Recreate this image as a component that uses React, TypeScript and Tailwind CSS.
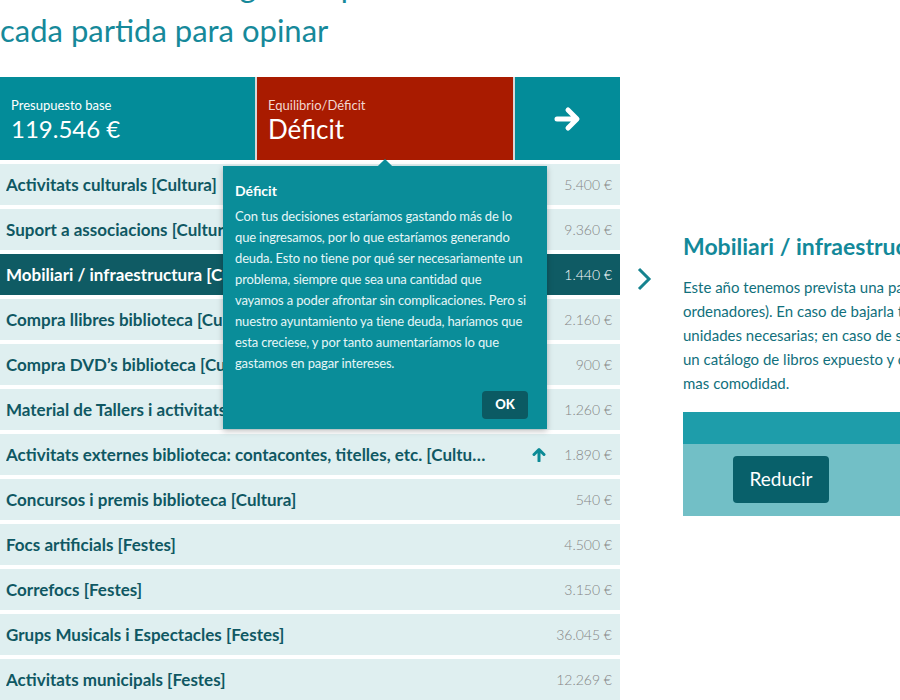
const rows = [
  { name: 'Activitats culturals [Cultura]', amount: '5.400 €' },
  { name: 'Suport a associacions [Cultura]', amount: '9.360 €' },
  { name: 'Mobiliari / infraestructura [Cultura]', amount: '1.440 €', active: true },
  { name: 'Compra llibres biblioteca [Cultura]', amount: '2.160 €' },
  { name: 'Compra DVD’s biblioteca [Cultura]', amount: '900 €' },
  { name: 'Material de Tallers i activitats [Cultura]', amount: '1.260 €' },
  { name: 'Activitats externes biblioteca: contacontes, titelles, etc. [Cultura]', amount: '1.890 €', up: true },
  { name: 'Concursos i premis biblioteca [Cultura]', amount: '540 €' },
  { name: 'Focs artificials [Festes]', amount: '4.500 €' },
  { name: 'Correfocs [Festes]', amount: '3.150 €' },
  { name: 'Grups Musicals i Espectacles [Festes]', amount: '36.045 €' },
  { name: 'Activitats municipals [Festes]', amount: '12.269 €' },
]

const tipLines = [
  'Con tus decisiones estaríamos gastando más de lo',
  'que ingresamos, por lo que estaríamos generando',
  'deuda. Esto no tiene por qué ser necesariamente un',
  'problema, siempre que sea una cantidad que',
  'vayamos a poder afrontar sin complicaciones. Pero si',
  'nuestro ayuntamiento ya tiene deuda, haríamos que',
  'esta creciese, y por tanto aumentaríamos lo que',
  'gastamos en pagar intereses.',
]

const font = { fontFamily: 'Lato, "Open Sans", sans-serif' }

const ArrowRight = () => (
  <svg width="28" height="26" viewBox="0 0 28 26" fill="none">
    <path d="M3 13h19M14 4l9 9-9 9" stroke="white" strokeWidth="5" strokeLinecap="round" strokeLinejoin="round" />
  </svg>
)

const ArrowUp = () => (
  <svg width="14" height="15" viewBox="0 0 14 15" fill="none">
    <path d="M7 14V3M2 7.5 7 2.5l5 5" stroke="#0c8a96" strokeWidth="3" strokeLinecap="round" strokeLinejoin="round" />
  </svg>
)

const Chevron = () => (
  <svg width="16" height="26" viewBox="0 0 16 26" fill="none">
    <path d="M3 3l10 10-10 10" stroke="#16838f" strokeWidth="3" />
  </svg>
)

const Tooltip = () => (
  <div className="absolute left-[223px] top-[89px] w-[324px] h-[263px] bg-[#0a8d99] shadow-[0_2px_6px_rgba(0,0,0,0.25)] px-[12px] pt-[15px] text-white">
    <div className="absolute -top-[5px] left-[157px] w-[10px] h-[10px] bg-[#0a8d99] rotate-45" />
    <div className="text-[14px] font-bold leading-[20px]">Déficit</div>
    <div className="mt-[5px] text-[13px] tracking-[-0.15px] leading-[21px] text-[#e6f6f7] whitespace-nowrap">
      {tipLines.map((l) => (
        <div key={l}>{l}</div>
      ))}
    </div>
    <button className="absolute right-[19px] bottom-[10px] w-[46px] h-[28px] rounded-[4px] bg-[#0b5a63] text-[13px] font-black text-white">
      OK
    </button>
  </div>
)

export default function App() {
  return (
    <div className="w-[900px] h-[700px] overflow-hidden bg-white" style={font}>
      <h1 className="-mt-[34px] text-[31px] leading-[40px] text-[#16899a] whitespace-nowrap">
        <div>Selecciona la categoría o pulsa en</div>
        <div className="mt-[4px]">cada partida para opinar</div>
      </h1>

      <div className="flex mt-[27px]">
        <div className="relative w-[620px] shrink-0">
          <div className="flex h-[83px] bg-[#d8d8d8] gap-[2px]">
            <div className="w-[255px] bg-[#038c99] pl-[11px] pt-[20px] text-white">
              <div className="text-[13px] leading-[16px]">Presupuesto base</div>
              <div className="text-[24px] leading-[30px] mt-[1px]">119.546 €</div>
            </div>
            <div className="w-[256px] bg-[#a91b00] pl-[11px] pt-[20px] text-white">
              <div className="text-[13px] leading-[16px] text-[#f2d6d0]">Equilibrio/Déficit</div>
              <div className="text-[26px] leading-[32px]">Déficit</div>
            </div>
            <div className="flex-1 bg-[#038c99] flex items-center justify-center">
              <ArrowRight />
            </div>
          </div>

          <div className="mt-[4px] flex flex-col gap-[4px]">
            {rows.map((r) => (
              <div
                key={r.name}
                className={`flex items-center h-[41px] pl-[6px] pr-[8px] ${r.active ? 'bg-[#0f5b64]' : 'bg-[#dfeff0]'}`}
              >
                <div className={`w-[484px] truncate text-[17px] font-bold ${r.active ? 'text-white' : 'text-[#0f5863]'}`}>
                  {r.name}
                </div>
                <div className="flex-1 flex justify-end">{r.up && <ArrowUp />}</div>
                <div className={`w-[66px] text-right text-[14px] font-light ${r.active ? 'text-white' : 'text-[#858585]'}`}>
                  {r.amount}
                </div>
              </div>
            ))}
          </div>

          <Tooltip />
        </div>

        <div className="w-[63px] shrink-0 pt-[189px] pl-[16px]">
          <Chevron />
        </div>

        <div className="w-[300px] shrink-0 pt-[155px]">
          <h2 className="text-[23px] font-bold leading-[28px] text-[#13899a] whitespace-nowrap">
            Mobiliari / infraestructura [Cultura]
          </h2>
          <p className="mt-[15px] text-[15px] leading-[24px] text-[#11707c] whitespace-nowrap">
            Este año tenemos prevista una partida para
            <br />
            ordenadores). En caso de bajarla tendríamos
            <br />
            unidades necesarias; en caso de subirla
            <br />
            un catálogo de libros expuesto y consultar
            <br />
            mas comodidad.
          </p>
          <div className="mt-[17px]">
            <div className="h-[32px] bg-[#1e9daa]" />
            <div className="h-[72px] bg-[#72bfc6] pl-[50px] pt-[12px]">
              <button className="w-[96px] h-[47px] rounded-[4px] bg-[#08606a] text-[19px] text-white">Reducir</button>
            </div>
          </div>
        </div>
      </div>
    </div>
  )
}
